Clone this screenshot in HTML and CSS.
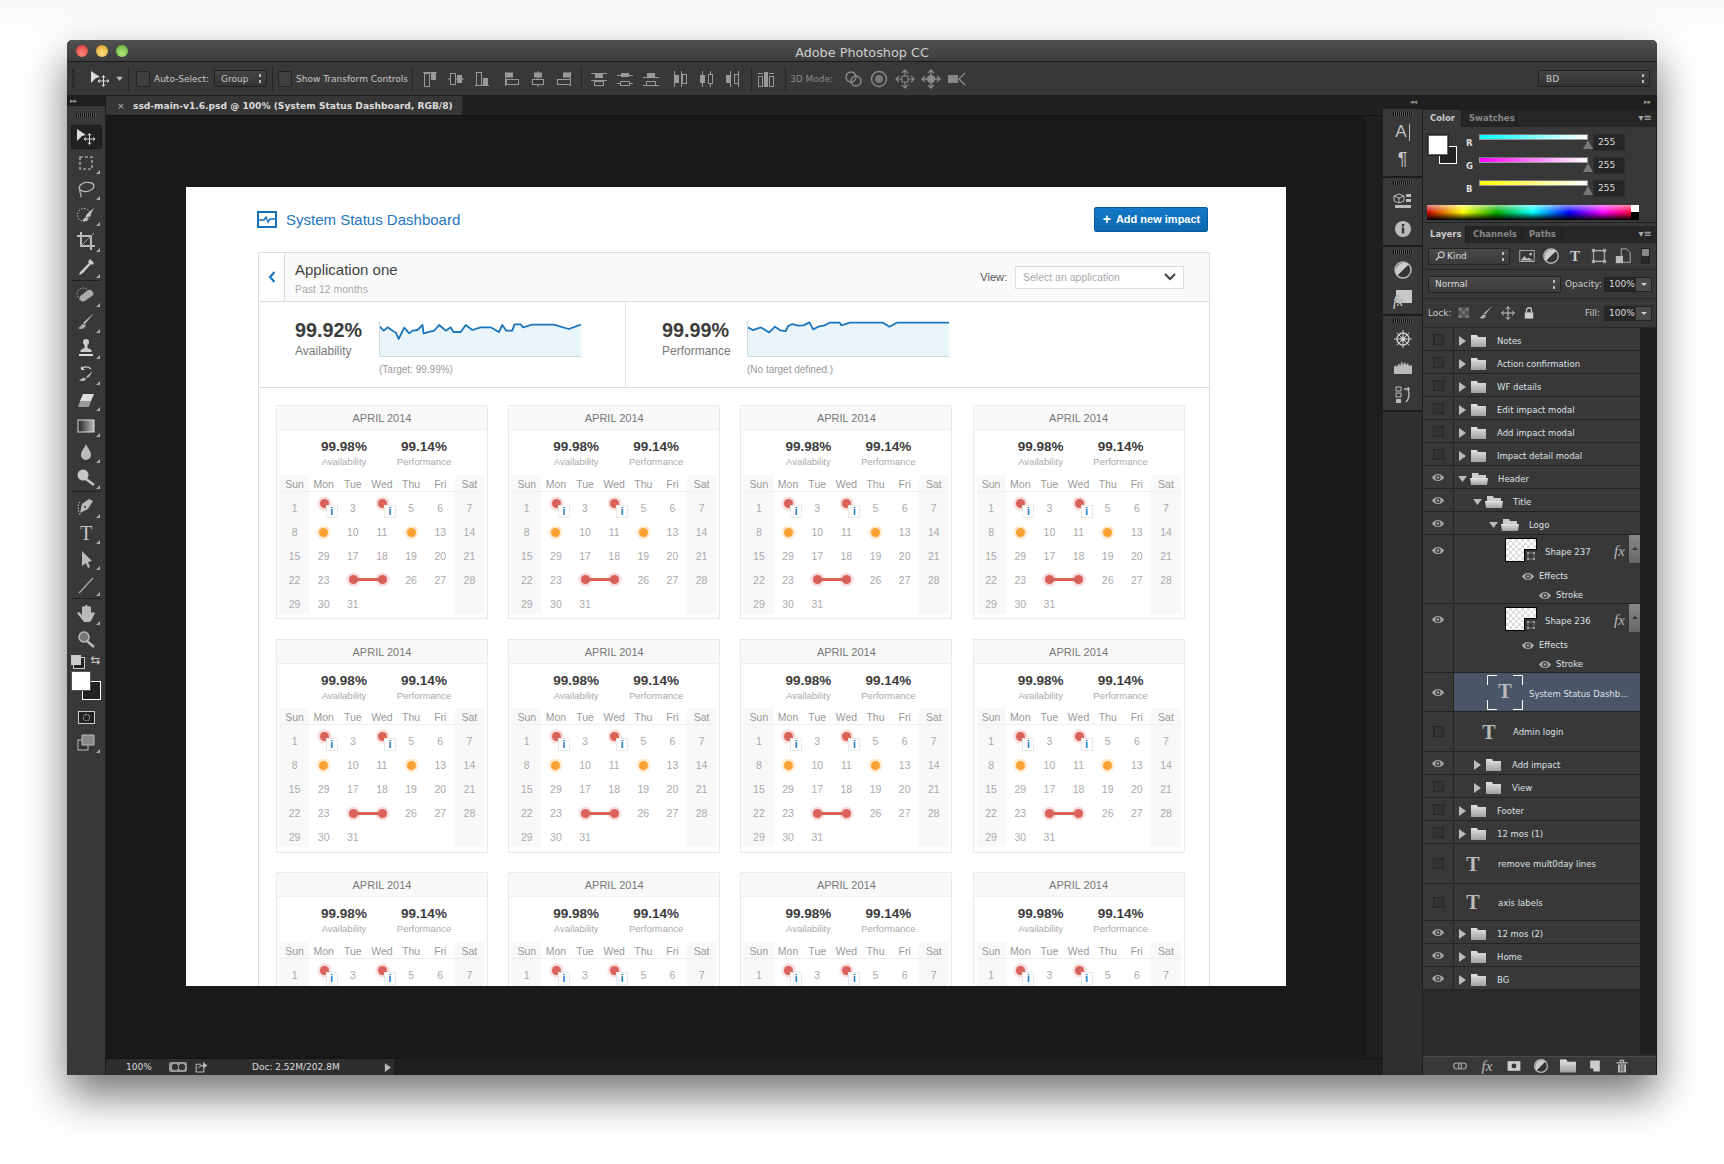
FILE: index.html
```html
<!DOCTYPE html>
<html lang="en">
<head>
<meta charset="utf-8">
<title>Adobe Photoshop CC</title>
<link rel="stylesheet" href="styles.css">
</head>
<body>
<svg class="defs" aria-hidden="true">
<defs>
<linearGradient id="fold" x1="0" y1="0" x2="0" y2="1"><stop offset="0" stop-color="#e4e4e4"/><stop offset="1" stop-color="#a0a0a0"/></linearGradient>
<linearGradient id="grad" x1="0" y1="0" x2="1" y2="0"><stop offset="0" stop-color="#222"/><stop offset="1" stop-color="#bbb"/></linearGradient>
<symbol id="move" viewBox="0 0 20 20"><path d="M1 2l9 6-4 1-1 1-4 4z" fill="#ddd" transform="translate(0 0)"/><path d="M13.5 7v10M8.5 12h10M12 8.5l1.5-2 1.5 2M12 15.500l1.500 2 1.500-2M10 10.500l-2 1.500 2 1.500M17 10.500l2 1.500-2 1.500" stroke="#ddd" fill="none"/></symbol>
<symbol id="marquee" viewBox="0 0 20 20"><rect x="4" y="4" width="12" height="12" fill="none" stroke="#c8c8c8" stroke-width="1.200" stroke-dasharray="3 2"/></symbol>
<symbol id="lasso" viewBox="0 0 20 20"><ellipse cx="10.500" cy="8" rx="7.500" ry="4.500" fill="none" stroke="#bbb" stroke-width="1.300" transform="rotate(-10 10 8)"/><path d="M4 11c-1 3 1 3 1 5s-1 1 0 2" fill="none" stroke="#bbb" stroke-width="1.300"/></symbol>
<symbol id="qsel" viewBox="0 0 20 20"><circle cx="8" cy="10" r="6.500" fill="none" stroke="#ccc" stroke-dasharray="1.500 1.500"/><path d="M18 3l-7 6-2 4 4-1z M6 15c2 0 2-2 3-2l3 0c0 3-4 4-6 2z" fill="#ccc"/></symbol>
<symbol id="crop" viewBox="0 0 20 20"><path d="M5 1v14h14M1 5h14v14" fill="none" stroke="#bbb" stroke-width="2"/><path d="M5 15L18 2" stroke="#999"/></symbol>
<symbol id="drop" viewBox="0 0 20 20"><path d="M14 2l4 4-2 2-1-1-8 9-3 2-1-1 2-3 8-8-1-1z" fill="#ccc"/></symbol>
<symbol id="heal" viewBox="0 0 20 20"><circle cx="7" cy="8" r="6" fill="none" stroke="#bbb" stroke-dasharray="1.500 1.500"/><rect x="3" y="6.500" width="15" height="7" rx="3.500" transform="rotate(-35 10 10)" fill="#aaa"/></symbol>
<symbol id="brush" viewBox="0 0 20 20"><path d="M18 1L9 12l-2-1z" fill="#c4c4c4"/><path d="M7 12c-2 0-2 3-5 4 2 2 7 1 8-3z" fill="#aaa"/></symbol>
<symbol id="stamp" viewBox="0 0 20 20"><circle cx="10" cy="4" r="3" fill="#ccc"/><path d="M8.500 6h3v4l4 2v2h-11v-2l4-2z" fill="#ccc"/><rect x="3" y="16" width="14" height="2" fill="#ddd"/></symbol>
<symbol id="hist" viewBox="0 0 20 20"><path d="M5 5a7 7 0 0 1 10 0" fill="none" stroke="#ccc" stroke-width="1.300"/><path d="M5 2v4h4z" fill="#ccc"/><path d="M17 7l-6 5-1 2 3-1z M3 16c3 0 3-3 6-2l1 1c-1 2-4 3-7 1z" fill="#bbb"/></symbol>
<symbol id="eraser" viewBox="0 0 20 20"><path d="M7 4h11l-3 7H4z" fill="#ddd"/><path d="M4 11h11l-2 6H2z" fill="#999"/></symbol>
<symbol id="gradient" viewBox="0 0 20 20"><rect x="2" y="4" width="16" height="12" fill="url(#grad)" stroke="#ddd"/></symbol>
<symbol id="blur" viewBox="0 0 20 20"><path d="M10 2c2 5 5 7 5 11a5 5 0 0 1-10 0c0-4 3-6 5-11z" fill="#bbb"/></symbol>
<symbol id="dodge" viewBox="0 0 20 20"><circle cx="7" cy="7" r="5.500" fill="#c8c8c8"/><path d="M10 11l8 6" stroke="#c8c8c8" stroke-width="2.500"/></symbol>
<symbol id="pen" viewBox="0 0 20 20"><path d="M17 4l-4-2-7 5-2 9 8-4z" fill="#bbb"/><path d="M4 5c-3 3-2 8 0 13" fill="none" stroke="#ccc" stroke-dasharray="1.500 1.500"/><circle cx="9" cy="10" r="1" fill="#333"/></symbol>
<symbol id="psel" viewBox="0 0 20 20"><path d="M6 2l10 10-4 1 2 5-2 1-2-5-4 3z" fill="#bbb"/></symbol>
<symbol id="line" viewBox="0 0 20 20"><path d="M3 18L17 3" stroke="#aaa" stroke-width="1.300"/></symbol>
<symbol id="hand" viewBox="0 0 20 20"><path d="M1 9l2-1 3 3V3l1.500-1L9 3v-2h2l1 2 1-1 2 1v6l2-1 2 1-4 8-2 1H8z" fill="#bbb"/></symbol>
<symbol id="zoomt" viewBox="0 0 20 20"><circle cx="8" cy="7" r="5" fill="#777" stroke="#bbb" stroke-width="1.500"/><path d="M11 11l7 6" stroke="#bbb" stroke-width="2.500"/></symbol>
<symbol id="screen" viewBox="0 0 20 20"><rect x="2" y="8" width="10" height="10" fill="#333" stroke="#bbb"/><rect x="6" y="3" width="12" height="10" fill="#888" stroke="#bbb"/></symbol>
<symbol id="info" viewBox="0 0 20 20"><circle cx="10" cy="10" r="8" fill="#bbb"/><rect x="8.800" y="8.500" width="2.400" height="6" fill="#333"/><rect x="8.800" y="5" width="2.400" height="2.400" fill="#333"/></symbol>
<symbol id="half" viewBox="0 0 20 20"><circle cx="10" cy="10" r="8" fill="#333" stroke="#bbb" stroke-width="1.500"/><path d="M4.400 15.600A8 8 0 0 1 15.600 4.400z" fill="#ccc"/></symbol>
<symbol id="cube" viewBox="0 0 20 20"><path d="M6 3l5 2v5l-5 2-5-2V5zM1 5l5 2 5-2M6 7v5" fill="none" stroke="#bbb"/><path d="M13 3h5v3h-5zM13 8h5v3h-5zM2 14h16v3H2z" fill="#bbb"/></symbol>
<symbol id="wheel" viewBox="0 0 20 20"><circle cx="10" cy="10" r="6" fill="none" stroke="#ccc" stroke-width="1.500"/><circle cx="10" cy="10" r="2.500" fill="#ccc"/><path d="M10 1v18M1 10h18M3.600 3.600l12.800 12.800M3.600 16.400L16.400 3.600" stroke="#ccc"/></symbol>
<symbol id="histo" viewBox="0 0 20 20"><path d="M1 17V10l2-2 1 2 2-4 1 3 2-5 1 4 2-3 1 3 2-2 1 3 3-1v9z" fill="#bbb"/></symbol>
<symbol id="histy" viewBox="0 0 20 20"><path d="M3 2h5v4H3zM3 8h5v4H3z" fill="none" stroke="#bbb"/><rect x="3" y="14" width="5" height="4" fill="#bbb"/><path d="M11 4h5l-1-2M16 4l-1 2M15 5c2 4 1 9-2 12" fill="none" stroke="#bbb" stroke-width="1.400"/></symbol>
<symbol id="img" viewBox="0 0 20 20"><rect x="2" y="4" width="16" height="12" fill="#333" stroke="#bbb"/><path d="M3 15l4-5 3 3 2-1 5 3z" fill="#bbb"/><circle cx="14" cy="8" r="1.500" fill="#bbb"/></symbol>
<symbol id="xform" viewBox="0 0 20 20"><path d="M4 4h12v12H4z" fill="none" stroke="#bbb" stroke-width="1.200"/><path d="M2 2h4v4H2zM14 2h4v4h-4zM2 14h4v4H2zM14 14h4v4h-4z" fill="#bbb" stroke="#333" stroke-width=".500"/></symbol>
<symbol id="smart" viewBox="0 0 20 20"><path d="M8 2h6l4 4v11H8z" fill="none" stroke="#bbb"/><rect x="2" y="10" width="8" height="8" fill="#bbb"/></symbol>
<symbol id="search" viewBox="0 0 12 12"><circle cx="7.500" cy="4.500" r="3.500" fill="none" stroke="#ccc" stroke-width="1.300"/><path d="M5 7l-4 4" stroke="#ccc" stroke-width="1.600"/></symbol>
<symbol id="chk" viewBox="0 0 20 20"><path d="M2 2h5v5H2zM12 2h5v5h-5zM7 7h5v5H7zM2 12h5v5H2zM12 12h5v5h-5z" fill="#777"/><path d="M7 2h5v5H7zM2 7h5v5H2zM12 7h5v5h-5zM7 12h5v5H7z" fill="#555"/></symbol>
<symbol id="cross" viewBox="0 0 20 20"><path d="M10 1v18M1 10h18M7 4l3-3 3 3M7 16l3 3 3-3M4 7l-3 3 3 3M16 7l3 3-3 3" fill="none" stroke="#ccc" stroke-width="1.400"/></symbol>
<symbol id="lock" viewBox="0 0 20 20"><rect x="4" y="9" width="12" height="9" fill="#ccc"/><path d="M6.500 9V6a3.500 3.500 0 0 1 7 0v3" fill="none" stroke="#ccc" stroke-width="1.800"/></symbol>
<symbol id="eye" viewBox="0 0 14 10"><path d="M0 5c3-5.500 11-5.500 14 0-3 5.500-11 5.500-14 0z" fill="#a8a8a8"/><circle cx="7" cy="5" r="3" fill="#3a3a3a"/><circle cx="7" cy="5" r="1.400" fill="#a8a8a8"/></symbol>
<symbol id="folder" viewBox="0 0 15 12"><path d="M0 0h6l1 2h8v10H0z" fill="url(#fold)"/></symbol>
<symbol id="folderopen" viewBox="0 0 18 12"><path d="M2 0h6l1 2h7v3H2z" fill="#ccc"/><path d="M0 5h18l-1 7H1z" fill="url(#fold)"/></symbol>
<symbol id="triR" viewBox="0 0 8 10"><path d="M1 0l7 5-7 5z" fill="#bbb"/></symbol>
<symbol id="triD" viewBox="0 0 10 8"><path d="M0 1h10L5 8z" fill="#bbb"/></symbol>
<symbol id="chain" viewBox="0 0 20 20"><rect x="2" y="6.500" width="10" height="7" rx="3.500" fill="none" stroke="#999" stroke-width="1.500"/><rect x="8" y="6.500" width="10" height="7" rx="3.500" fill="none" stroke="#999" stroke-width="1.500"/></symbol>
<symbol id="mask" viewBox="0 0 20 20"><rect x="2" y="4" width="16" height="12" fill="#ccc"/><circle cx="10" cy="10" r="3" fill="#333"/></symbol>
<symbol id="newl" viewBox="0 0 20 20"><path d="M4 3h12v14H8v-4H4z" fill="#ccc"/></symbol>
<symbol id="trash" viewBox="0 0 20 20"><path d="M3 6h14M8 6V3h4v3" fill="none" stroke="#bbb" stroke-width="1.500"/><path d="M5 8h10v10H5z" fill="#bbb"/><path d="M8 9v8M10 9v8M12 9v8" stroke="#333" stroke-width=".800"/></symbol>
<symbol id="share" viewBox="0 0 20 20"><path d="M3 6h7M3 6v11h11v-5" fill="none" stroke="#bbb" stroke-width="1.500"/><path d="M6 13c0-4 3-6 7-6V3l6 5-6 5V9c-3 0-5 1-7 4z" fill="#bbb"/></symbol>
<symbol id="a1" viewBox="0 0 20 20"><path d="M3 3.500h14" stroke="#999"/><rect x="4.500" y="4.500" width="5" height="13" fill="none" stroke="#999"/><rect x="11" y="4" width="5" height="7" fill="#999"/></symbol>
<symbol id="a2" viewBox="0 0 20 20"><path d="M2 10h16" stroke="#999"/><rect x="4.500" y="4.500" width="5" height="11" fill="#333" stroke="#999"/><rect x="11" y="6" width="5" height="8" fill="#999"/></symbol>
<symbol id="a3" viewBox="0 0 20 20"><path d="M3 16.500h14" stroke="#999"/><rect x="4.500" y="3.500" width="5" height="13" fill="none" stroke="#999"/><rect x="11" y="9" width="5" height="7" fill="#999"/></symbol>
<symbol id="a4" viewBox="0 0 20 20"><path d="M3.500 3v14" stroke="#999"/><rect x="4" y="3.500" width="7" height="5" fill="#999"/><rect x="4.500" y="10.500" width="12" height="5" fill="none" stroke="#999"/></symbol>
<symbol id="a5" viewBox="0 0 20 20"><path d="M10 2v16" stroke="#999"/><rect x="6" y="3.500" width="8" height="5" fill="#999"/><rect x="4.500" y="10.500" width="11" height="5" fill="#333" stroke="#999"/></symbol>
<symbol id="a6" viewBox="0 0 20 20"><path d="M16.500 3v14" stroke="#999"/><rect x="9" y="3.500" width="7" height="5" fill="#999"/><rect x="3.500" y="10.500" width="13" height="5" fill="none" stroke="#999"/></symbol>
<symbol id="d1" viewBox="0 0 20 20"><path d="M2 4.500h16M2 11.500h16" stroke="#999"/><rect x="6" y="5" width="8" height="4" fill="#999"/><rect x="5.500" y="12.500" width="9" height="4" fill="none" stroke="#999"/></symbol>
<symbol id="d2" viewBox="0 0 20 20"><path d="M2 6.500h16M2 14.500h16" stroke="#999"/><rect x="6" y="4" width="8" height="4" fill="#999"/><rect x="5.500" y="12.500" width="9" height="4" fill="#333" stroke="#999"/></symbol>
<symbol id="d3" viewBox="0 0 20 20"><path d="M2 8.500h16M2 16.500h16" stroke="#999"/><rect x="6" y="4" width="8" height="4" fill="#999"/><rect x="5.500" y="12.500" width="9" height="4" fill="none" stroke="#999"/></symbol>
<symbol id="d4" viewBox="0 0 20 20"><path d="M4.500 2v16M11.500 2v16" stroke="#999"/><rect x="5" y="6" width="4" height="8" fill="#999"/><rect x="12.500" y="5.500" width="4" height="9" fill="none" stroke="#999"/></symbol>
<symbol id="d5" viewBox="0 0 20 20"><path d="M6.500 2v16M14.500 2v16" stroke="#999"/><rect x="4" y="6" width="5" height="8" fill="#999"/><rect x="12.500" y="5.500" width="4" height="9" fill="#333" stroke="#999"/></symbol>
<symbol id="d6" viewBox="0 0 20 20"><path d="M8.500 2v16M16.500 2v16" stroke="#999"/><rect x="4" y="6" width="4" height="8" fill="#999"/><rect x="12.500" y="5.500" width="4" height="9" fill="none" stroke="#999"/></symbol>
<symbol id="auto" viewBox="0 0 20 20"><rect x="2.500" y="7.500" width="4" height="10" fill="none" stroke="#999"/><rect x="8" y="3" width="4" height="15" fill="#999"/><rect x="13.500" y="7.500" width="4" height="10" fill="none" stroke="#999"/><path d="M2 4.500h5M13 4.500h5" stroke="#999"/></symbol>
<symbol id="m1" viewBox="0 0 20 20"><circle cx="8" cy="8" r="5" fill="none" stroke="#888" stroke-width="1.500"/><circle cx="13" cy="12" r="5" fill="none" stroke="#888" stroke-width="1.500"/></symbol>
<symbol id="m2" viewBox="0 0 20 20"><circle cx="10" cy="10" r="7.500" fill="none" stroke="#888" stroke-width="1.500"/><circle cx="10" cy="10" r="4" fill="#777"/></symbol>
<symbol id="m3" viewBox="0 0 20 20"><path d="M10 1v18M1 10h18M7 4l3-3 3 3M7 16l3 3 3-3M4 7l-3 3 3 3M16 7l3 3-3 3" fill="none" stroke="#888" stroke-width="1.200"/><rect x="7" y="7" width="6" height="6" fill="#383838" stroke="#888"/></symbol>
<symbol id="m4" viewBox="0 0 20 20"><path d="M10 1v18M1 10h18M7 4l3-3 3 3M7 16l3 3 3-3M4 7l-3 3 3 3M16 7l3 3-3 3" fill="none" stroke="#888" stroke-width="1.400"/><circle cx="10" cy="10" r="4" fill="#888"/></symbol>
<symbol id="m5" viewBox="0 0 20 20"><rect x="1" y="6" width="10" height="8" fill="#888"/><path d="M18 4l-6 6 6 6" fill="none" stroke="#888" stroke-width="1.400"/></symbol>
<symbol id="logo" viewBox="0 0 20 17"><rect x="1" y="1" width="18" height="15" fill="none" stroke="#1272bd" stroke-width="2"/><path d="M2 9h5l2-3 2 5 2-3h5" fill="none" stroke="#1272bd" stroke-width="1.400"/></symbol>
</defs>
</svg>

<main class="window">
  <header class="titlebar">
    <div class="lights"><span class="light red"></span><span class="light amber"></span><span class="light green"></span></div>
    <div class="apptitle">Adobe Photoshop CC</div>
  </header>

  <div class="options">
    <span class="grip-v"></span>
    <svg class="i20 o-move"><use href="#move"/></svg>
    <svg class="arrow o-arrow"><use href="#triD"/></svg>
    <span class="o-sep s1"></span>
    <span class="check c1"></span>
    <span class="o-label l-auto">Auto-Select:</span>
    <span class="select s-group">Group<span class="updown"></span></span>
    <span class="o-sep s2"></span>
    <span class="check c2"></span>
    <span class="o-label l-show">Show Transform Controls</span>
    <span class="o-sep"></span>
    <div class="oicons g1"><svg class="i20"><use href="#a1"/></svg><svg class="i20"><use href="#a2"/></svg><svg class="i20"><use href="#a3"/></svg></div>
    <div class="oicons g2"><svg class="i20"><use href="#a4"/></svg><svg class="i20"><use href="#a5"/></svg><svg class="i20"><use href="#a6"/></svg></div>
    <span class="o-sep s3"></span>
    <div class="oicons g2"><svg class="i20"><use href="#d1"/></svg><svg class="i20"><use href="#d2"/></svg><svg class="i20"><use href="#d3"/></svg></div>
    <div class="oicons g3"><svg class="i20"><use href="#d4"/></svg><svg class="i20"><use href="#d5"/></svg><svg class="i20"><use href="#d6"/></svg></div>
    <span class="o-sep s4"></span>
    <div class="oicons g5"><svg class="i20"><use href="#auto"/></svg></div>
    <span class="o-sep s4"></span>
    <span class="o-label l-3d">3D Mode:</span>
    <div class="oicons g6"><svg class="i20"><use href="#m1"/></svg><svg class="i20"><use href="#m2"/></svg><svg class="i20"><use href="#m3"/></svg><svg class="i20"><use href="#m4"/></svg><svg class="i20"><use href="#m5"/></svg></div>
    <span class="select s-bd">BD<span class="updown"></span></span>
  </div>

  <div class="work">
    <aside class="tools">
      <div class="collapse">&#9656;&#9656;</div>
      <div class="grip-wrap"><span class="grip"></span></div>
      <div class="tool active"><svg class="i20"><use href="#move"/></svg></div>
      <div class="tool more"><svg class="i20"><use href="#marquee"/></svg></div>
      <div class="tool more"><svg class="i20"><use href="#lasso"/></svg></div>
      <div class="tool more"><svg class="i20"><use href="#qsel"/></svg></div>
      <div class="tool more"><svg class="i20"><use href="#crop"/></svg></div>
      <div class="tool more"><svg class="i20"><use href="#drop"/></svg></div>
      <div class="tool-sep"></div>
      <div class="tool more"><svg class="i20"><use href="#heal"/></svg></div>
      <div class="tool more"><svg class="i20"><use href="#brush"/></svg></div>
      <div class="tool more"><svg class="i20"><use href="#stamp"/></svg></div>
      <div class="tool more"><svg class="i20"><use href="#hist"/></svg></div>
      <div class="tool more"><svg class="i20"><use href="#eraser"/></svg></div>
      <div class="tool more"><svg class="i20"><use href="#gradient"/></svg></div>
      <div class="tool more"><svg class="i20"><use href="#blur"/></svg></div>
      <div class="tool more"><svg class="i20"><use href="#dodge"/></svg></div>
      <div class="tool-sep"></div>
      <div class="tool more"><svg class="i20"><use href="#pen"/></svg></div>
      <div class="tool more tool-t">T</div>
      <div class="tool more"><svg class="i20"><use href="#psel"/></svg></div>
      <div class="tool more"><svg class="i20"><use href="#line"/></svg></div>
      <div class="tool-sep"></div>
      <div class="tool more"><svg class="i20"><use href="#hand"/></svg></div>
      <div class="tool"><svg class="i20"><use href="#zoomt"/></svg></div>
      <div class="swaprow"><span class="mini-swatch"></span><span class="swap">&#8646;</span></div>
      <div class="fgbg"><span class="fg"></span><span class="bg"></span></div>
      <div class="qmask"><span class="qmask-box"><span class="qmask-dot"></span></span></div>
      <div class="tool more"><svg class="i20"><use href="#screen"/></svg></div>
    </aside>

    <section class="center">
      <div class="tabbar">
        <div class="doctab"><span class="tabx">&#215;</span><span>ssd-main-v1.6.psd @ 100% (System Status Dashboard, RGB/8)</span></div>
      </div>
      <div class="canvas">
        <div class="stage">
          <div class="doc">
            <div class="doc-head">
              <div class="brand"><svg class="logo"><use href="#logo"/></svg><span>System Status Dashboard</span></div>
              <button class="add"><span class="plus">+</span>Add new impact</button>
            </div>
            <div class="panel">
              <div class="panel-head">
                <div class="back"><svg class="backchev" viewBox="0 0 8 12"><path d="M6.500 1L2 6l4.500 5" fill="none" stroke="#1272bd" stroke-width="2"/></svg></div>
                <div class="app"><div class="app-name">Application one</div><div class="app-sub">Past 12 months</div></div>
                <div class="view"><span>View:</span>
                  <div class="picker"><span>Select an application</span><svg class="pickchev" viewBox="0 0 12 8"><path d="M1 1l5 5 5-5" fill="none" stroke="#444" stroke-width="2"/></svg></div>
                </div>
              </div>
              <div class="summary">
                <div class="sum first">
                  <div class="sum-num"><strong>99.92%</strong><span>Availability</span></div>
                  <div class="sum-chart">
                    <svg class="spark" viewBox="417 363 605 105" preserveAspectRatio="none"><path class="area" d="M417 380L428 392 440 382 455 392 465 398 473 417 490 383 505 400 515 392 530 390 545 375 548 400 580 392 595 375 615 392 630 382 638 396 660 396 675 375 695 390 720 382 750 382 775 396 785 375 797 392 815 392 822 373 840 373 848 382 875 374 940 374 985 387 1022 374V468H417z"/><path class="stroke" d="M417 380L428 392 440 382 455 392 465 398 473 417 490 383 505 400 515 392 530 390 545 375 548 400 580 392 595 375 615 392 630 382 638 396 660 396 675 375 695 390 720 382 750 382 775 396 785 375 797 392 815 392 822 373 840 373 848 382 875 374 940 374 985 387 1022 374"/></svg>
                    <div class="note">(Target: 99.99%)</div>
                  </div>
                </div>
                <div class="sum second">
                  <div class="sum-num"><strong>99.99%</strong><span>Performance</span></div>
                  <div class="sum-chart">
                    <svg class="spark" viewBox="290 213 543 104" preserveAspectRatio="none"><path class="area" d="M290 232L303 240 325 232 347 247 363 230 378 241 392 243 398 228 410 222 425 227 440 226 456 217 466 238 480 230 497 226 510 218 538 218 542 226 565 218 655 218 672 230 692 218 833 218V317H290z"/><path class="stroke" d="M290 232L303 240 325 232 347 247 363 230 378 241 392 243 398 228 410 222 425 227 440 226 456 217 466 238 480 230 497 226 510 218 538 218 542 226 565 218 655 218 672 230 692 218 833 218"/></svg>
                    <div class="note">(No target defined.)</div>
                  </div>
                </div>
              </div>
              <div class="cards" id="cards"></div>
            </div>
          </div>
        </div>
        <div class="vscroll"></div>
      </div>
      <div class="status">
        <div class="status-main">
          <span class="zoomval">100%</span>
          <span class="gpu"></span>
          <svg class="i14"><use href="#share"/></svg>
          <span class="docinfo">Doc: 2.52M/202.8M</span>
          <svg class="statusarrow"><use href="#triR"/></svg>
        </div>
      </div>
    </section>

    <aside class="dock">
      <div class="dock-top"><span>&#9666;&#9666;</span></div>
      <div class="dock-group">
        <span class="grip"></span>
        <div class="dock-i dock-a">A<span class="bar"></span></div>
        <div class="dock-i dock-p">&#182;</div>
      </div>
      <div class="dock-group">
        <span class="grip"></span>
        <div class="dock-i"><svg class="i20"><use href="#cube"/></svg></div>
        <div class="dock-i"><svg class="i20"><use href="#info"/></svg></div>
      </div>
      <div class="dock-group">
        <span class="grip"></span>
        <div class="dock-i"><svg class="i20"><use href="#half"/></svg></div>
        <div class="dock-i dock-fx"><span class="fxbox"></span><span class="fxt">fx</span></div>
      </div>
      <div class="dock-group last">
        <span class="grip"></span>
        <div class="dock-i"><svg class="i20"><use href="#wheel"/></svg></div>
        <div class="dock-i"><svg class="i20"><use href="#histo"/></svg></div>
        <div class="dock-i"><svg class="i20"><use href="#histy"/></svg></div>
      </div>
    </aside>

    <aside class="panels">
      <div class="panels-top"><span>&#9656;&#9656;</span></div>
      <div class="tabs">
        <span class="ptab on t-color">Color</span><span class="ptab t-swatch">Swatches</span>
        <span class="pmenu">&#9662;&#8801;</span>
      </div>
      <div class="colorbody">
        <div class="colortop">
          <div class="colorchips"><span class="cfg"></span><span class="cbg"></span></div>
          <div class="sliders">
            <div class="srow"><b>R</b><span class="track tr"><i class="knob"></i></span><span class="val">255</span></div>
            <div class="srow"><b>G</b><span class="track tg"><i class="knob"></i></span><span class="val">255</span></div>
            <div class="srow"><b>B</b><span class="track tb"><i class="knob"></i></span><span class="val">255</span></div>
          </div>
        </div>
        <div class="spectrum"><span class="bw"></span></div>
      </div>
      <div class="tabs t2">
        <span class="ptab on t-layers">Layers</span><span class="ptab t-chan">Channels</span><span class="ptab t-paths">Paths</span>
        <span class="pmenu">&#9662;&#8801;</span>
      </div>
      <div class="lrow kindrow">
        <span class="pselect s-kind"><svg class="srch"><use href="#search"/></svg>Kind<span class="updown"></span></span>
        <div class="kindicons">
          <svg class="i18"><use href="#img"/></svg><svg class="i18"><use href="#half"/></svg><span class="kt">T</span><svg class="i18"><use href="#xform"/></svg><svg class="i18"><use href="#smart"/></svg>
        </div>
        <span class="toggle"></span>
      </div>
      <div class="lrow blendrow">
        <span class="pselect s-normal">Normal<span class="updown"></span></span>
        <span class="lbl op">Opacity:</span>
        <span class="pct">100%<i class="pctbtn"></i></span>
      </div>
      <div class="lrow lockrow">
        <span class="lbl lk">Lock:</span>
        <div class="lockicons"><svg class="i14"><use href="#chk"/></svg><svg class="i16"><use href="#brush"/></svg><svg class="i14"><use href="#cross"/></svg><svg class="i14"><use href="#lock"/></svg></div>
        <span class="lbl fill">Fill:</span>
        <span class="pct">100%<i class="pctbtn"></i></span>
      </div>
      <div class="listwrap">
        <div class="list">
          <div class="row"><span class="vis"><i class="box"></i></span><div class="body l0"><svg class="tri"><use href="#triR"/></svg><svg class="fold"><use href="#folder"/></svg><span class="name">Notes</span></div></div>
          <div class="row"><span class="vis"><i class="box"></i></span><div class="body l0"><svg class="tri"><use href="#triR"/></svg><svg class="fold"><use href="#folder"/></svg><span class="name">Action confirmation</span></div></div>
          <div class="row"><span class="vis"><i class="box"></i></span><div class="body l0"><svg class="tri"><use href="#triR"/></svg><svg class="fold"><use href="#folder"/></svg><span class="name">WF details</span></div></div>
          <div class="row"><span class="vis"><i class="box"></i></span><div class="body l0"><svg class="tri"><use href="#triR"/></svg><svg class="fold"><use href="#folder"/></svg><span class="name">Edit impact modal</span></div></div>
          <div class="row"><span class="vis"><i class="box"></i></span><div class="body l0"><svg class="tri"><use href="#triR"/></svg><svg class="fold"><use href="#folder"/></svg><span class="name">Add impact modal</span></div></div>
          <div class="row"><span class="vis"><i class="box"></i></span><div class="body l0"><svg class="tri"><use href="#triR"/></svg><svg class="fold"><use href="#folder"/></svg><span class="name">Impact detail modal</span></div></div>
          <div class="row"><span class="vis"><svg class="eye"><use href="#eye"/></svg></span><div class="body l0"><svg class="tri down"><use href="#triD"/></svg><svg class="fold open"><use href="#folderopen"/></svg><span class="name">Header</span></div></div>
          <div class="row"><span class="vis"><svg class="eye"><use href="#eye"/></svg></span><div class="body l1"><svg class="tri down"><use href="#triD"/></svg><svg class="fold open"><use href="#folderopen"/></svg><span class="name">Title</span></div></div>
          <div class="row"><span class="vis"><svg class="eye"><use href="#eye"/></svg></span><div class="body l2"><svg class="tri down"><use href="#triD"/></svg><svg class="fold open"><use href="#folderopen"/></svg><span class="name">Logo</span></div></div>
          <div class="row shape"><span class="vis top"><svg class="eye"><use href="#eye"/></svg></span>
            <div class="shapebody">
              <div class="shapeline"><span class="thumb"><i class="vm"><svg class="i12"><use href="#xform"/></svg></i></span><span class="name">Shape 237</span><span class="fxmark">fx</span><span class="fxup"></span></div>
              <div class="fxline e1"><svg class="eye"><use href="#eye"/></svg><span class="name">Effects</span></div>
              <div class="fxline e2"><svg class="eye"><use href="#eye"/></svg><span class="name">Stroke</span></div>
            </div>
          </div>
          <div class="row shape"><span class="vis top"><svg class="eye"><use href="#eye"/></svg></span>
            <div class="shapebody">
              <div class="shapeline"><span class="thumb"><i class="vm"><svg class="i12"><use href="#xform"/></svg></i></span><span class="name">Shape 236</span><span class="fxmark">fx</span><span class="fxup"></span></div>
              <div class="fxline e1"><svg class="eye"><use href="#eye"/></svg><span class="name">Effects</span></div>
              <div class="fxline e2"><svg class="eye"><use href="#eye"/></svg><span class="name">Stroke</span></div>
            </div>
          </div>
          <div class="row tall39"><span class="vis"><svg class="eye"><use href="#eye"/></svg></span><div class="body sel"><span class="tbox"><svg class="corners" viewBox="0 0 36 35"><path d="M.5 10V.5H10M26 .5h9.500V10M.5 25v9.500H10M26 34.500h9.500V25" fill="none" stroke="#fff"/></svg>T</span><span class="name">System Status Dashb...</span></div></div>
          <div class="row tall40"><span class="vis"><i class="box"></i></span><div class="body tx2"><span class="t">T</span><span class="name">Admin login</span></div></div>
          <div class="row"><span class="vis"><svg class="eye"><use href="#eye"/></svg></span><div class="body l1"><svg class="tri"><use href="#triR"/></svg><svg class="fold"><use href="#folder"/></svg><span class="name">Add impact</span></div></div>
          <div class="row"><span class="vis"><i class="box"></i></span><div class="body l1"><svg class="tri"><use href="#triR"/></svg><svg class="fold"><use href="#folder"/></svg><span class="name">View</span></div></div>
          <div class="row"><span class="vis"><i class="box"></i></span><div class="body l0"><svg class="tri"><use href="#triR"/></svg><svg class="fold"><use href="#folder"/></svg><span class="name">Footer</span></div></div>
          <div class="row"><span class="vis"><i class="box"></i></span><div class="body l0"><svg class="tri"><use href="#triR"/></svg><svg class="fold"><use href="#folder"/></svg><span class="name">12 mos (1)</span></div></div>
          <div class="row tall40"><span class="vis"><i class="box"></i></span><div class="body tx1"><span class="t">T</span><span class="name">remove mult0day lines</span></div></div>
          <div class="row tall37"><span class="vis"><i class="box"></i></span><div class="body tx1"><span class="t">T</span><span class="name">axis labels</span></div></div>
          <div class="row"><span class="vis"><svg class="eye"><use href="#eye"/></svg></span><div class="body l0"><svg class="tri"><use href="#triR"/></svg><svg class="fold"><use href="#folder"/></svg><span class="name">12 mos (2)</span></div></div>
          <div class="row"><span class="vis"><svg class="eye"><use href="#eye"/></svg></span><div class="body l0"><svg class="tri"><use href="#triR"/></svg><svg class="fold"><use href="#folder"/></svg><span class="name">Home</span></div></div>
          <div class="row"><span class="vis"><svg class="eye"><use href="#eye"/></svg></span><div class="body l0"><svg class="tri"><use href="#triR"/></svg><svg class="fold"><use href="#folder"/></svg><span class="name">BG</span></div></div>
        </div>
        <div class="lscroll"></div>
      </div>
      <div class="lfoot">
        <svg class="i16"><use href="#chain"/></svg><span class="footfx">fx</span><svg class="i16"><use href="#mask"/></svg><svg class="i16"><use href="#half"/></svg><svg class="i16"><use href="#folder"/></svg><svg class="i16"><use href="#newl"/></svg><svg class="i16"><use href="#trash"/></svg>
      </div>
    </aside>
  </div>
</main>
<script src="app.js"></script>
</body>
</html>
```

FILE: styles.css
```css
* { box-sizing: border-box; }
html, body { margin: 0; height: 1164px; overflow: hidden; background: #fff; }
body { font-family: "DejaVu Sans", "Liberation Sans", sans-serif; padding: 40px 0 0 67px; background: linear-gradient(#f9f9f9, #fff 40px); }
.defs { width: 0; height: 0; display: block; position: absolute; }
i { font-style: normal; }

.window { width: 1590px; height: 1035px; background: #383838; border-radius: 5px 5px 0 0; overflow: hidden; display: flex; flex-direction: column; position: relative; }
body::before { content: ""; position: absolute; left: 67px; top: 40px; width: 1590px; height: 1035px; box-shadow: 0 20px 40px 0 rgba(0,0,0,.55); }

.titlebar { height: 22px; flex: none; display: flex; align-items: center; background: linear-gradient(#505050, #3c3c3c); border-bottom: 1px solid #1c1c1c; position: relative; }
.lights { display: flex; gap: 8px; margin-left: 9px; }
.light { width: 12px; height: 12px; border-radius: 50%; }
.red { background: radial-gradient(circle at 50% 70%, #ff8a80, #d7322c); }
.amber { background: radial-gradient(circle at 50% 70%, #ffdf80, #d99a1f); }
.green { background: radial-gradient(circle at 50% 70%, #b7ec7c, #56a833); }
.apptitle { position: absolute; left: 0; right: 0; top: 2px; line-height: 21px; text-align: center; color: #cfcfcf; font-size: 12.800px; }

.options { height: 34px; flex: none; display: flex; align-items: center; background: #383838; border-bottom: 1px solid #1f1f1f; padding-left: 5px; color: #c8c8c8; font-size: 9px; }
.grip-v { width: 3px; height: 20px; background: repeating-linear-gradient(#1f1f1f 0 1px, transparent 1px 2px); }
.i20 { width: 20px; height: 20px; flex: none; display: block; }
.i18 { width: 18px; height: 18px; flex: none; display: block; }
.i16 { width: 16px; height: 16px; flex: none; display: block; }
.i14 { width: 14px; height: 14px; flex: none; display: block; }
.i12 { width: 10px; height: 10px; display: block; }
.o-move { margin-left: 15px; }
.arrow { width: 7px; height: 5px; }
.o-arrow { margin-left: 6px; }
.o-sep { width: 1px; height: 24px; background: #262626; flex: none; }
.s1 { margin-left: 5px; }
.s2 { margin-left: 5px; }
.s3 { margin-left: 4px; }
.s4 { margin-left: 6px; }
.check { width: 14px; height: 16px; border: 1px solid #222; border-radius: 2px; background: #3f3f3f; flex: none; }
.c1 { margin-left: 7px; }
.c2 { margin-left: 5px; }
.o-label { white-space: nowrap; flex: none; padding-top: 1px; }
.l-auto { margin-left: 4px; width: 60px; }
.l-show { margin-left: 4px; width: 116px; }
.l-3d { margin-left: 4px; width: 42px; color: #8a8a8a; }
.select { height: 17px; line-height: 17px; border: 1px solid #1f1f1f; border-radius: 2px; background: linear-gradient(#444, #333); padding-left: 6px; position: relative; flex: none; }
.s-group { width: 53px; }
.s-bd { width: 112px; margin-left: auto; margin-right: 7px; padding-left: 7px; }
.updown { position: absolute; right: 4px; top: 3px; width: 5px; height: 9px; background: linear-gradient(#bbb, #bbb) 1.500px 0/2px 3px no-repeat, linear-gradient(#bbb, #bbb) 1.500px 6px/2px 3px no-repeat; }
.oicons { display: flex; flex: none; }
.oicons .i20 { margin: 0 3px; }
.g1 { margin-left: 4px; }
.g2 { margin-left: 4px; }
.g3 { margin-left: 3px; }
.g5 { margin-left: 1px; }
.g6 { margin-left: 8px; }

.work { flex: 1; display: flex; min-height: 0; }

.tools { width: 39px; flex: none; background: #383838; border-right: 1px solid #1e1e1e; display: flex; flex-direction: column; align-items: center; }
.collapse { height: 10px; width: 100%; background: #1f1f1f; color: #999; font-size: 7px; line-height: 10px; padding-left: 3px; }
.grip-wrap { height: 18px; display: flex; align-items: center; }
.grip { display: block; width: 20px; height: 4px; background: repeating-linear-gradient(90deg, #111 0 1px, #555 1px 2px); margin: 0 auto; }
.tool { width: 31px; height: 26px; flex: none; display: flex; align-items: center; justify-content: center; position: relative; }
.tool.more::after { content: ""; position: absolute; right: 2px; bottom: 2px; border: 2px solid transparent; border-right-color: #aaa; border-bottom-color: #aaa; }
.tool.active { background: #222; border: 1px solid #1a1a1a; border-radius: 2px; height: 24px; margin: 1px 0; }
.tool-t { font-family: "Liberation Serif", serif; font-size: 20px; color: #c4c4c4; }
.tool-sep { width: 29px; height: 3px; flex: none; border-top: 1px solid #222; }
.swaprow { width: 31px; height: 14px; flex: none; display: flex; justify-content: space-between; align-items: center; padding: 0 1px 0 0; color: #ccc; font-size: 12px; }
.mini-swatch { width: 10px; height: 10px; background: #ccc; box-shadow: 3px 3px 0 #222, 3px 3px 0 1px #ccc; }
.swap { line-height: 12px; }
.fgbg { width: 30px; height: 30px; flex: none; margin-top: 4px; position: relative; }
.fg { position: absolute; left: 0; top: 0; width: 20px; height: 20px; background: #fff; z-index: 1; border: 1px solid #555; }
.bg { position: absolute; left: 11px; top: 10px; width: 19px; height: 19px; background: #222; border: 1px solid #fff; }
.qmask { height: 24px; flex: none; display: flex; align-items: center; margin-top: 4px; }
.qmask-box { width: 17px; height: 13px; border: 1px solid #ccc; background: #222; display: flex; align-items: center; justify-content: center; }
.qmask-dot { width: 7px; height: 7px; border-radius: 50%; border: 1px dotted #ddd; }

.center { flex: 1; min-width: 0; display: flex; flex-direction: column; background: #191919; }
.tabbar { height: 20px; flex: none; background: #202020; border-bottom: 1px solid #111; display: flex; }
.doctab { width: 357px; background: #363636; color: #ddd; font-size: 9.100px; font-weight: 700; line-height: 21px; display: flex; white-space: nowrap; padding-left: 11px; border-right: 1px solid #222; }
.tabx { width: 15px; margin-right: 1px; font-weight: 400; color: #bbb; }
.canvas { flex: 1; min-height: 0; display: flex; }
.stage { flex: 1; min-width: 0; padding: 71px 0 0 80px; overflow: hidden; }
.vscroll { width: 18px; flex: none; background: #1e1e1e; }
.status { height: 17px; flex: none; background: #1e1e1e; border-top: 1px solid #151515; }
.status-main { width: 288px; height: 100%; background: #2e2e2e; display: flex; align-items: center; color: #ddd; font-size: 9px; }
.zoomval { margin-left: 20px; width: 43px; }
.gpu { width: 18px; height: 10px; background: #999; border-radius: 2px; margin-right: 7px; background-image: radial-gradient(circle at 6px 5px, #333 3px, transparent 3.200px), radial-gradient(circle at 13px 5px, #333 3px, transparent 3.200px); }
.docinfo { margin-left: 44px; width: 132px; white-space: nowrap; }
.statusarrow { width: 7px; height: 9px; }

.dock { width: 40px; flex: none; background: #2f2f2f; border-right: 1px solid #1e1e1e; display: flex; flex-direction: column; }
.dock-top { height: 13px; background: #1f1f1f; color: #999; font-size: 7px; line-height: 12px; text-align: right; padding-right: 5px; flex: none; }
.dock-group { height: 69px; padding-top: 3px; border-bottom: 2px solid #1c1c1c; background: #383838; flex: none; }
.dock-group.last { height: 96px; }
.dock-i { height: 28px; display: flex; align-items: center; justify-content: center; position: relative; color: #c4c4c4; }
.dock-group .grip { margin-bottom: 2px; }
.dock-a { font-family: "Liberation Sans", sans-serif; font-size: 17px; margin-top: 1px; margin-bottom: -1px; }
.bar { width: 1px; height: 17px; background: #bbb; margin-left: 2px; }
.dock-p { font-family: "Liberation Sans", sans-serif; font-size: 18px; }
.fxbox { width: 16px; height: 13px; background: #c8c8c8; margin: -4px 0 0 3px; }
.fxt { position: absolute; left: 10px; top: 10px; font: italic 14px "Liberation Serif", serif; color: #ddd; text-shadow: 0 0 1px #333; }

.panels { width: 234px; flex: none; background: #383838; display: flex; flex-direction: column; border-right: 1px solid #1a1a1a; color: #ccc; font-size: 9px; }
.panels-top { height: 14px; background: #1f1f1f; color: #999; font-size: 7px; line-height: 12px; text-align: right; padding-right: 5px; flex: none; }
.tabs { height: 17px; flex: none; display: flex; background: #262626; position: relative; }
.tabs.t2 { margin-top: 3px; }
.ptab { line-height: 16px; font-weight: 700; color: #888; border-right: 1px solid #1c1c1c; padding-left: 7px; flex: none; font-size: 8.500px; }
.ptab.on { background: #383838; color: #ccc; }
.t-color { width: 39px; }
.t-swatch { width: 55px; }
.t-layers { width: 43px; }
.t-chan { width: 56px; }
.t-paths { width: 40px; }
.pmenu { position: absolute; right: 4px; top: 0; line-height: 16px; font-size: 10px; color: #aaa; }
.colorbody { height: 96px; flex: none; padding: 7px 0 0 5px; border-bottom: 1px solid #222; }
.colortop { display: flex; height: 71px; }
.colorchips { width: 30px; height: 30px; position: relative; margin-top: 1px; flex: none; }
.cfg { position: absolute; left: 0; top: 0; width: 20px; height: 20px; background: #fff; border: 1px solid #666; z-index: 1; outline: 1px solid #222; }
.cbg { position: absolute; left: 11px; top: 11px; width: 18px; height: 18px; background: #222; border: 1px solid #fff; }
.sliders { margin-left: 8px; }
.srow { height: 23px; display: flex; align-items: flex-start; }
.srow b { width: 13px; font-weight: 700; font-size: 8.500px; line-height: 18px; color: #ddd; }
.track { width: 109px; height: 6px; position: relative; border: 1px solid #999; border-top-color: #777; flex: none; }
.tr { background: linear-gradient(90deg, #0ff, #fff); }
.tg { background: linear-gradient(90deg, #f0f, #fff); }
.tb { background: linear-gradient(90deg, #ff0, #fff); }
.knob { position: absolute; right: -6px; top: 5px; width: 0; height: 0; border-left: 5px solid transparent; border-right: 5px solid transparent; border-bottom: 9px solid #777; }
.val { width: 32px; height: 17px; margin-left: 5px; background: #262626; border: 1px solid #2e2e2e; color: #ddd; line-height: 15px; padding-left: 4px; }
.spectrum { width: 212px; height: 15px; margin-left: -1px; position: relative; background: linear-gradient(to bottom, rgba(255,255,255,.55), transparent 50%, #000 100%), linear-gradient(90deg, #c00 0, #ff0 17%, #0a0 33%, #0ff 50%, #00f 67%, #f0f 83%, #f00 100%); }
.bw { position: absolute; right: 0; top: 0; width: 8px; height: 15px; background: linear-gradient(#fff 50%, #000 50%); }
.lrow { flex: none; display: flex; align-items: center; border-bottom: 1px solid #262626; padding: 0 4px 0 5px; }
.kindrow { height: 27px; }
.blendrow { height: 29px; }
.lockrow { height: 28px; border-bottom: 0; }
.pselect { height: 17px; line-height: 15px; border: 1px solid #222; border-radius: 2px; background: linear-gradient(#4a4a4a, #3a3a3a); padding-left: 6px; position: relative; flex: none; color: #ddd; }
.srch { width: 10px; height: 10px; margin-right: 2px; vertical-align: -2px; }
.s-kind { width: 82px; }
.s-normal { width: 133px; }
.kindicons { display: flex; align-items: center; margin-left: 8px; gap: 6px; }
.kt { width: 18px; text-align: center; font: 700 15px "Liberation Serif", serif; color: #ccc; }
.toggle { width: 9px; height: 16px; margin-left: 9px; background: linear-gradient(#888 50%, #2a2a2a 50%); border: 1px solid #222; flex: none; }
.lbl { flex: none; color: #ccc; }
.op { margin-left: 4px; width: 39px; }
.pct { width: 48px; height: 15px; flex: none; background: #262626; border: 1px solid #222; line-height: 13px; padding-left: 4px; color: #ddd; position: relative; }
.pctbtn { position: absolute; right: 0; top: 0; width: 15px; height: 13px; background: #4a4a4a; }
.pctbtn::after { content: ""; position: absolute; left: 5px; top: 5px; border: 3px solid transparent; border-top-color: #ccc; border-bottom: 0; }
.lk { width: 26px; }
.lockicons { display: flex; align-items: center; margin-left: 3px; gap: 7px; }
.fill { width: 19px; margin-left: auto; }
.listwrap { flex: 1; min-height: 0; display: flex; background: #2b2b2b; border-top: 1px solid #262626; }
.list { width: 217px; flex: none; }
.lscroll { width: 16px; flex: none; background: #1f1f1f; margin-bottom: 2px; }
.row { height: 23px; display: flex; background: #383838; border-bottom: 1px solid #232323; font-size: 8.500px; color: #dde3e8; }
.tall39 { height: 39px; }
.tall40 { height: 40px; }
.tall37 { height: 37px; }
.row.shape { height: 69px; }
.vis { width: 31px; flex: none; border-right: 1px solid #232323; display: flex; align-items: center; justify-content: center; }
.vis.top { align-items: flex-start; padding-top: 11px; }
.box { width: 11px; height: 11px; border: 1px solid #262626; background: #333; display: block; }
.eye { width: 12px; height: 9px; flex: none; }
.body { flex: 1; display: flex; align-items: center; min-width: 0; white-space: nowrap; }
.l0, .l1, .l2 { padding-top: 3px; }
.l0 { padding-left: 4px; }
.l1 { padding-left: 19px; }
.l2 { padding-left: 35px; }
.tri { width: 8px; height: 10px; flex: none; }
.tri.down { width: 9px; height: 7px; }
.fold { width: 15px; height: 12px; margin: 0 11px 0 5px; flex: none; }
.fold.open { width: 18px; margin: 0 10px 0 3px; }
.shapebody { flex: 1; display: flex; flex-direction: column; padding-top: 3px; }
.shapeline { height: 29px; display: flex; align-items: flex-start; padding-left: 51px; position: relative; }
.shapeline .name { line-height: 28px; margin-left: 8px; width: 69px; }
.thumb { width: 32px; height: 24px; border: 1px solid #000; background: repeating-conic-gradient(#ddd 0 25%, #fff 0 50%) 0 0/6px 6px; position: relative; flex: none; }
.vm { position: absolute; right: -1px; bottom: -1px; width: 13px; height: 13px; background: #383838; border-left: 1px solid #000; border-top: 1px solid #000; padding: 1px; }
.fxmark { font: italic 15px/27px "Liberation Serif", serif; color: #bbb; width: 15px; }
.fxup { position: absolute; right: 0; top: 0; width: 11px; height: 28px; background: linear-gradient(#888, #666); margin-top: -3px; }
.fxup::after { content: ""; position: absolute; left: 3px; top: 12px; border: 3px solid transparent; border-bottom-color: #333; border-top: 0; }
.fxline { height: 18px; display: flex; align-items: center; }
.fxline .eye { margin-right: 5px; }
.e1 { padding-left: 68px; }
.e2 { padding-left: 85px; padding-top: 2px; }
.sel { background: #4a5568; padding-left: 33px; }
.sel .name { padding-top: 3px; }
.tbox { width: 36px; height: 35px; flex: none; position: relative; text-align: center; font: 700 20px/33px "Liberation Serif", serif; color: #bbb; margin-right: 6px; }
.corners { position: absolute; inset: 0; width: 36px; height: 35px; }
.t { font: 700 20px "Liberation Serif", serif; color: #bbb; text-align: center; flex: none; }
.tx1, .tx2 { padding-top: 1px; }
.tx2 { padding-left: 26px; }
.tx2 .t { width: 18px; margin-right: 15px; }
.tx1 { padding-left: 10px; }
.tx1 .t { width: 18px; margin-right: 16px; }
.lfoot { height: 19px; flex: none; display: flex; align-items: center; background: #383838; border-top: 1px solid #4a4a4a; padding-left: 29px; gap: 11px; }
.footfx { font: italic 15px "Liberation Serif", serif; color: #bbb; width: 16px; text-align: center; }

.doc { width: 1100px; height: 799px; background: #fff; padding-top: 20px; overflow: hidden; font-family: "Liberation Sans", Arial, sans-serif; }
.doc-head { display: flex; justify-content: space-between; align-items: center; height: 25px; padding: 0 78px 0 71px; margin-bottom: 20px; }
.brand { display: flex; align-items: center; color: #1e76bd; font-size: 15px; }
.logo { width: 20px; height: 17px; margin-right: 9px; }
.add { width: 114px; height: 25px; border: 1px solid #0b5c9e; border-radius: 2px; background: linear-gradient(#1279c9, #0d67ad); color: #fff; font: 700 11px/22px "Liberation Sans", Arial, sans-serif; padding: 0 0 1px 1px; white-space: nowrap; }
.plus { font-size: 14px; margin-right: 5px; vertical-align: -1px; }
.panel { margin-left: 72px; width: 952px; border: 1px solid #ddd; }
.panel-head { height: 49px; background: #fafafa; border-bottom: 1px solid #ddd; display: flex; align-items: stretch; }
.back { width: 26px; flex: none; border-right: 1px solid #ddd; display: flex; align-items: center; justify-content: center; background: #fff; }
.backchev { width: 8px; height: 12px; }
.app { padding: 8px 0 0 10px; flex: 1; }
.app-name { font-size: 15px; line-height: 18px; color: #444; }
.app-sub { font-size: 10.500px; line-height: 14px; color: #aaa; margin-top: 3px; }
.view { display: flex; align-items: center; color: #555; font-size: 11px; padding-right: 25px; }
.picker { width: 169px; height: 23px; margin-left: 8px; background: #fff; border: 1px solid #ddd; display: flex; align-items: center; justify-content: space-between; padding: 0 7px; color: #aaa; font-size: 10.500px; }
.pickchev { width: 12px; height: 8px; }
.summary { height: 86px; display: flex; border-bottom: 1px solid #ddd; }
.sum { display: flex; padding-left: 36px; }
.sum.first { width: 367px; flex: none; border-right: 1px solid #e4e4e4; }
.sum.second { padding-left: 36px; }
.sum-num { width: 85px; padding-top: 16px; }
.first .sum-num { width: 84px; }
.sum-num strong { display: block; font-size: 19.800px; line-height: 24px; color: #3c3c3c; }
.sum-num span { display: block; font-size: 12px; line-height: 18px; color: #777; }
.sum-chart { padding-top: 19px; width: 202px; }
.spark { width: 202px; height: 36px; display: block; border-left: 1px solid #cfd6db; border-bottom: 1px solid #cfd6db; }
.area { fill: #e9f4fb; }
.stroke { fill: none; stroke: #1a75bb; stroke-width: 1.800; vector-effect: non-scaling-stroke; stroke-linejoin: round; }
.note { margin-top: 7px; font-size: 10px; line-height: 12px; color: #999; }
.cards { display: grid; grid-template-columns: repeat(4, 212px); gap: 19.500px 20.200px; padding: 17px 0 0 17px; }
.card { height: 214px; border: 1px solid #eaeaea; padding: 0 3px; overflow: hidden; }
.card-head { margin: 0 -3px; height: 24px; line-height: 25px; background: #f9f9f9; border-bottom: 1px solid #eee; text-align: center; font-size: 11px; color: #777; }
.card-stats { display: flex; justify-content: center; padding: 8px 0 0 4px; height: 44.500px; }
.card-stat { width: 80px; text-align: center; }
.card-stat b { display: block; font-size: 13.500px; line-height: 17px; color: #3c3c3c; }
.card-stat span { display: block; font-size: 9.500px; line-height: 14px; color: #aaa; }
.cal { display: grid; grid-template-columns: repeat(7, 1fr); grid-template-rows: 17px 28px 24px 24px 24px 22px; font-size: 10.500px; color: #aaa; text-align: center; }
.wd { color: #999; line-height: 18px; border-bottom: 1px solid #eee; }
.day { position: relative; line-height: 24px; }
.r1 { padding-top: 4px; }
.we { background: #f8f8f8; }
.dot { position: absolute; width: 9px; height: 9px; border-radius: 50%; left: 50%; top: 50%; margin: -4.500px 0 0 -4.500px; }
.dot.red { background: #d9625a; box-shadow: 0 0 0 2.500px rgba(217,98,90,.22); margin-top: -1px; margin-left: -4px; top: 8px; }
.dot.org { background: #f9a233; box-shadow: 0 0 0 2.500px rgba(249,162,51,.22); margin-top: -4px; }
.badge { position: absolute; left: 50%; top: 13px; margin-left: 2px; width: 12px; height: 13px; background: #fff; border: 1px solid #e8e8e8; color: #1272bd; font: 700 10px/12px "Liberation Sans", sans-serif; }
.range { position: absolute; left: 50%; top: 50%; width: 30px; height: 3px; margin-top: -1.500px; background: #d9625a; z-index: 1; }
.range::before, .range::after { content: ""; position: absolute; top: -3px; width: 9px; height: 9px; border-radius: 50%; background: #d9625a; box-shadow: 0 0 0 2.500px rgba(217,98,90,.22); }
.range::before { left: -4px; }
.range::after { right: -4px; }
```

FILE: app.js
```js
var wd = ["Sun", "Mon", "Tue", "Wed", "Thu", "Fri", "Sat"];
var rows = [
  ["1", "R", "3", "R", "5", "6", "7"],
  ["8", "O", "10", "11", "O", "13", "14"],
  ["15", "29", "17", "18", "19", "20", "21"],
  ["22", "23", "L", "", "26", "27", "28"],
  ["29", "30", "31", "", "", "", ""]
];
function cell(v, c, r) {
  var cls = "day" + (c === 0 || c === 6 ? " we" : "") + (r === 0 ? " r1" : "");
  var inner = v;
  if (v === "R") inner = '<span class="dot red"></span><span class="badge">i</span>';
  if (v === "O") inner = '<span class="dot org"></span>';
  if (v === "L") inner = '<span class="range"></span>';
  return '<div class="' + cls + '">' + inner + "</div>";
}
var html = "";
for (var n = 0; n < 12; n++) {
  var cal = wd.map(function (d, i) {
    return '<div class="wd' + (i === 0 || i === 6 ? " we" : "") + '">' + d + "</div>";
  }).join("");
  /* The third row of cards runs off the artboard: only its first week shows. */
  rows.slice(0, n < 8 ? 5 : 1).forEach(function (row, r) {
    row.forEach(function (v, c) { cal += cell(v, c, r); });
  });
  html += '<article class="card"><div class="card-head">APRIL 2014</div>' +
    '<div class="card-stats"><div class="card-stat"><b>99.98%</b><span>Availability</span></div>' +
    '<div class="card-stat"><b>99.14%</b><span>Performance</span></div></div>' +
    '<div class="cal">' + cal + "</div></article>";
}
document.getElementById("cards").innerHTML = html;
```
